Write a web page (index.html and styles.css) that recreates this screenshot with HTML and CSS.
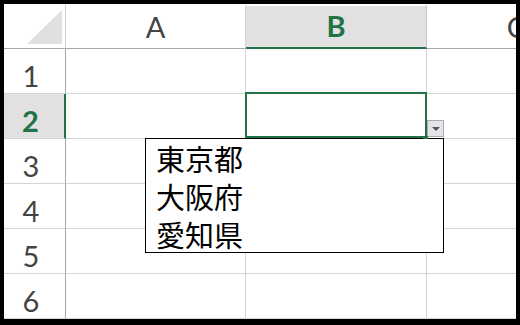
FILE: index.html
```html
<!DOCTYPE html>
<html lang="ja">
<head>
  <meta charset="UTF-8">
  <title>Excel ドロップダウンリスト</title>
  <link rel="stylesheet" href="styles.css">
</head>
<body>
  <div class="frame">
    <div class="sheet">
      <div class="corner"><div class="triangle"></div></div>
      <div class="col-head">A</div>
      <div class="col-head selected">B</div>
      <div class="col-head">C</div>

      <div class="row-head">1</div>
      <div class="cell"></div>
      <div class="cell"></div>
      <div class="cell"></div>

      <div class="row-head selected">2</div>
      <div class="cell"></div>
      <div class="cell active"><span class="fill-handle"></span></div>
      <div class="cell"></div>

      <div class="row-head">3</div>
      <div class="cell"></div>
      <div class="cell"></div>
      <div class="cell"></div>

      <div class="row-head">4</div>
      <div class="cell"></div>
      <div class="cell"></div>
      <div class="cell"></div>

      <div class="row-head">5</div>
      <div class="cell"></div>
      <div class="cell"></div>
      <div class="cell"></div>

      <div class="row-head">6</div>
      <div class="cell"></div>
      <div class="cell"></div>
      <div class="cell"></div>

      <!-- dropdown for B2 -->
      <div class="drop-btn"><span class="arrow"></span></div>
      <ul class="drop-list">
        <li>東京都</li>
        <li>大阪府</li>
        <li>愛知県</li>
      </ul>
    </div>
  </div>
</body>
</html>
```

FILE: styles.css
```css
* {
  margin: 0;
  padding: 0;
  box-sizing: border-box;
}

body {
  background: #000;
  font-family: Lato, "Noto Sans", sans-serif;
}

.frame {
  width: 520px;
  height: 325px;
  padding: 4px 4px 6px 4px;
  overflow: hidden;
}

.sheet {
  position: relative;
  width: 512px;
  height: 315px;
  background: #fff;
  display: grid;
  grid-template-columns: 62px 180px 181px 180px;
  grid-template-rows: repeat(7, 45px);
  overflow: hidden;
}

.corner {
  border-right: 1px solid #d4d4d4;
  border-bottom: 1px solid #a6a6a6;
  display: flex;
  justify-content: flex-end;
  align-items: flex-end;
  padding: 0 3px 4px 0;
}

.triangle {
  width: 35px;
  height: 34px;
  background: #dfdfdf;
  clip-path: polygon(100% 0, 100% 100%, 0 100%);
}

.col-head {
  border-top: 2px solid #fff;
  border-right: 1px solid #d4d4d4;
  border-bottom: 1px solid #a6a6a6;
  display: flex;
  justify-content: center;
  align-items: center;
  font-size: 29px;
  color: #444;
  padding-bottom: 2px;
}

.col-head.selected {
  background: #e1e1e1;
  border-right-color: #c6c6c6;
  border-bottom: 2px solid #217346;
  color: #217346;
  font-weight: bold;
}

.row-head {
  border-right: 1px solid #a6a6a6;
  border-bottom: 1px solid #d4d4d4;
  display: flex;
  justify-content: center;
  align-items: center;
  padding: 8px 7px 0 0;
  font-size: 29px;
  color: #444;
}

.row-head.selected {
  background: #e1e1e1;
  border-right: 2px solid #217346;
  color: #217346;
  font-weight: bold;
}

.cell {
  border-right: 1px solid #d4d4d4;
  border-bottom: 1px solid #d4d4d4;
}

.cell.active {
  position: relative;
}

.cell.active::after {
  content: "";
  position: absolute;
  top: -2px;
  left: -1px;
  right: -1px;
  bottom: 0;
  border: 2px solid #217346;
}

.fill-handle {
  position: absolute;
  right: -2px;
  bottom: -1px;
  width: 5px;
  height: 3px;
  background: #217346;
  z-index: 1;
}

.drop-btn {
  position: absolute;
  left: 423px;
  top: 116px;
  width: 17px;
  height: 17px;
  background: #e2e4e8;
  border: 1px solid #a9abaf;
  display: flex;
  justify-content: center;
  align-items: center;
}

.arrow {
  width: 0;
  height: 0;
  border-left: 4px solid transparent;
  border-right: 4px solid transparent;
  border-top: 4px solid #555;
}

.drop-list {
  position: absolute;
  left: 141px;
  top: 134px;
  width: 299px;
  height: 115px;
  background: #fff;
  border: 1px solid #000;
  list-style: none;
  padding: 0 0 0 10px;
  font-family: "Noto Sans CJK JP", sans-serif;
  font-size: 29px;
  line-height: 38px;
  color: #000;
}
```
